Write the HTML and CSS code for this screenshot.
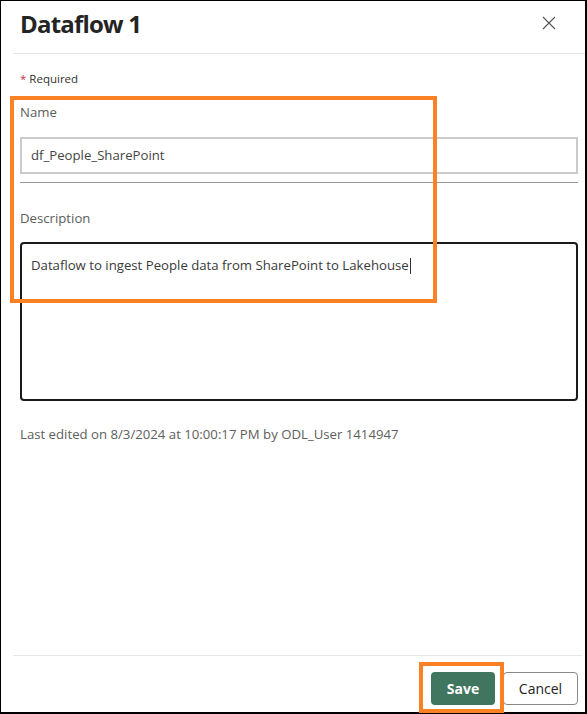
FILE: index.html
```html
<!DOCTYPE html>
<html>
<head>
<meta charset="utf-8">
<link rel="stylesheet" href="styles.css">
</head>
<body>
<div class="dialog">
  <div class="header">
    <h1 class="title">Dataflow 1</h1>
    <svg class="close" width="14" height="14" viewBox="0 0 14 14"><path d="M1 1 L13 13 M13 1 L1 13" stroke="#555" stroke-width="1.1" fill="none"/></svg>
  </div>
  <div class="content">
    <div class="required"><span class="star">*</span> Required</div>
    <div class="label name-label">Name</div>
    <div class="input">df_People_SharePoint</div>
    <div class="underline"></div>
    <div class="label desc-label">Description</div>
    <div class="textarea">Dataflow to ingest People data from SharePoint to Lakehouse<span class="caret"></span></div>
    <div class="meta">Last edited on 8/3/2024 at 10:00:17 PM by ODL_User 1414947</div>
  </div>
  <div class="footer">
    <button class="btn save">Save</button>
    <button class="btn cancel">Cancel</button>
  </div>
  <div class="hl hl-fields"></div>
  <div class="hl hl-save"></div>
</div>
</body>
</html>
```
FILE: styles.css
```css
html, body { margin: 0; padding: 0; background: #fff; }
body { font-family: "Segoe UI", "Open Sans", "Noto Sans", sans-serif; color: #323130; }
.dialog {
  position: relative;
  width: 587px; height: 714px;
  box-sizing: border-box;
  border: 1px solid #000;
  border-right-width: 2px;
  border-bottom-width: 2px;
  display: flex; flex-direction: column;
  background: #fff;
}
.header {
  height: 52px;
  margin-left: 12px;
  padding-left: 7px;
  padding-right: 29px;
  border-bottom: 1px solid #e6e6e6;
  display: flex; align-items: flex-start; justify-content: space-between;
}
.title { margin: 7px 0 0; font-size: 24px; font-weight: 700; color: #242424; line-height: 32px; letter-spacing: -0.8px; }
.close { margin-top: 15px; }
.content { flex: 1; padding: 0 7px 0 19px; font-size: 13.2px; }
.required { margin-top: 17px; font-size: 11.5px; line-height: 16px; color: #323130; }
.star { color: #c4314b; }
.label { font-size: 13.2px; line-height: 20px; color: #5c5c5c; }
.name-label { margin-top: 15px; }
.input {
  margin-top: 15px; height: 37px; box-sizing: border-box;
  border: 2px solid #cbcbcb; padding: 0 9px; line-height: 33px; color: #444;
}
.underline { margin-top: 8px; height: 1px; background: #9a9a9a; }
.desc-label { margin-top: 25px; }
.textarea {
  margin-top: 14px; height: 159px; box-sizing: border-box;
  border: 2px solid #1b1b1b; border-radius: 4px;
  padding: 11px 9px; line-height: 20px; color: #3a3a3a;
}
.caret { display: inline-block; width: 1px; height: 16px; background: #333; vertical-align: -4px; margin-left: 1px; }
.meta { margin-top: 23px; color: #605e5c; line-height: 20px; }
.footer {
  height: 57px; margin-left: 12px; margin-right: 3px;
  border-top: 1px solid #e6e6e6;
  display: flex; justify-content: flex-end; align-items: flex-start;
  padding-top: 16px; padding-right: 4px; gap: 8px; box-sizing: border-box;
}
.btn {
  height: 33px; border-radius: 4px; font-family: inherit; font-size: 14px;
  padding: 0 10px; box-sizing: border-box;
}
.save { width: 64px; background: #40765f; color: #fff; font-weight: 700; border: none; }
.cancel { width: 75px; background: #fff; color: #242424; border: 1px solid #8a8886; }
.hl { position: absolute; border: 4px solid #fb8124; box-sizing: border-box; }
.hl-fields { left: 9px; top: 95px; width: 427px; height: 207px; }
.hl-save { left: 418px; top: 661px; width: 85px; height: 51px; }
```
